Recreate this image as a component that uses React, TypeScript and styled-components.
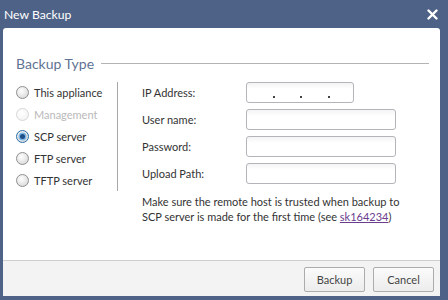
import React from "react";
import styled, { createGlobalStyle } from "styled-components";

const Global = createGlobalStyle`
  html, body { margin: 0; padding: 0; }
  body { width: 448px; height: 300px; overflow: hidden; font-family: Lato, "Open Sans", sans-serif; }
`;

const Window = styled.div`
  width: 448px;
  height: 300px;
  background: #4e6287;
  display: flex;
  flex-direction: column;
  box-sizing: border-box;
`;

const TitleBar = styled.div`
  height: 28px;
  display: flex;
  align-items: center;
  justify-content: space-between;
  padding: 1px 10px 0 4px;
  box-sizing: border-box;
  color: #ffffff;
  font-size: 12.2px;
`;

const Body = styled.div`
  flex: 1;
  margin: 0 8px 4px 3px;
  background: #ffffff;
  border-radius: 3px 3px 0 0;
  display: flex;
  flex-direction: column;
  overflow: hidden;
`;

const Content = styled.div`
  flex: 1;
  padding: 26px 11px 0 13px;
`;

const Legend = styled.div`
  display: flex;
  align-items: center;
  height: 18px;
  color: #5f7394;
  font-size: 14px;
`;

const LegendLine = styled.div`
  flex: 1;
  height: 1px;
  background: #b4b4b4;
  margin-left: 7px;
`;

const Columns = styled.div`
  display: flex;
  margin-top: 10px;
`;

const RadioList = styled.div`
  width: 101px;
  height: 109px;
  border-right: 1px solid #a8a8a8;
  display: flex;
  flex-direction: column;
`;

const RadioRow = styled.div<{ $disabled?: boolean }>`
  height: 23px;
  display: flex;
  align-items: center;
  font-size: 11px;
  color: ${(p) => (p.$disabled ? "#b9b9b9" : "#333333")};
  white-space: nowrap;
`;

const RadioCircle = styled.span<{ $checked?: boolean; $disabled?: boolean }>`
  width: 11px;
  height: 11px;
  border-radius: 50%;
  border: 1px solid ${(p) => (p.$checked ? "#2a6fa8" : p.$disabled ? "#d6d6d6" : "#8f8f8f")};
  background: ${(p) =>
    p.$disabled
      ? "radial-gradient(circle at 40% 35%, #ffffff, #f1f1f1)"
      : "radial-gradient(circle at 40% 35%, #ffffff 0%, #e4e4e4 60%, #cfcfcf 100%)"};
  margin-right: 5px;
  display: flex;
  align-items: center;
  justify-content: center;
  flex-shrink: 0;
  &::after {
    content: "";
    display: ${(p) => (p.$checked ? "block" : "none")};
    width: 5px;
    height: 5px;
    border-radius: 50%;
    background: #1d4f86;
    box-shadow: 0 0 0 1.5px #7fb6e4;
  }
`;

const RightCol = styled.div`
  flex: 1;
  padding-left: 24px;
`;

const FormGrid = styled.div`
  display: grid;
  grid-template-columns: 104px auto;
  row-gap: 6px;
  align-items: center;
`;

const Label = styled.div`
  font-size: 11px;
  color: #333333;
`;

const Field = styled.div<{ $w: number }>`
  width: ${(p) => p.$w}px;
  height: 21px;
  box-sizing: border-box;
  border: 1px solid #b3b5bb;
  border-radius: 3px;
  background: linear-gradient(#f4f4f4, #ffffff 6px);
  position: relative;
`;

const IpDot = styled.span`
  position: absolute;
  top: 13px;
  width: 1.5px;
  height: 1.5px;
  background: #444;
`;

const Note = styled.div`
  margin-top: 10px;
  font-size: 11px;
  line-height: 15px;
  color: #333333;
  width: 268px;
`;

const Link = styled.a`
  color: #6a3d8e;
  text-decoration: underline;
`;

const Footer = styled.div`
  height: 36px;
  box-sizing: border-box;
  border-top: 1px solid #cfcfcf;
  background: #f3f3f3;
  display: flex;
  justify-content: flex-end;
  align-items: center;
  gap: 8px;
  padding: 2px 6px 0 0;
`;

const Button = styled.button`
  width: 61px;
  height: 25px;
  box-sizing: border-box;
  border: 1px solid #acacac;
  border-radius: 2px;
  background: linear-gradient(#fbfbfb, #ececec);
  color: #444444;
  font-family: inherit;
  font-size: 11px;
  padding: 0;
`;

const Close = () => (
  <svg width="11" height="11" viewBox="0 0 11 11">
    <path d="M1.5 1.5 L9.5 9.5 M9.5 1.5 L1.5 9.5" stroke="#fff" strokeWidth="2.4" strokeLinecap="round" />
  </svg>
);

const radios = [
  { label: "This appliance" },
  { label: "Management", disabled: true },
  { label: "SCP server", checked: true },
  { label: "FTP server" },
  { label: "TFTP server" },
];

export default function App() {
  return (
    <>
      <Global />
      <Window>
        <TitleBar>
          <span>New Backup</span>
          <Close />
        </TitleBar>
        <Body>
          <Content>
            <Legend>
              <span>Backup Type</span>
              <LegendLine />
            </Legend>
            <Columns>
              <RadioList>
                {radios.map((r) => (
                  <RadioRow key={r.label} $disabled={r.disabled}>
                    <RadioCircle $checked={r.checked} $disabled={r.disabled} />
                    {r.label}
                  </RadioRow>
                ))}
              </RadioList>
              <RightCol>
                <FormGrid>
                  <Label>IP Address:</Label>
                  <Field $w={108}>
                    <IpDot style={{ left: 26 }} />
                    <IpDot style={{ left: 53 }} />
                    <IpDot style={{ left: 81 }} />
                  </Field>
                  <Label>User name:</Label>
                  <Field $w={150} />
                  <Label>Password:</Label>
                  <Field $w={150} />
                  <Label>Upload Path:</Label>
                  <Field $w={150} />
                </FormGrid>
                <Note>
                  Make sure the remote host is trusted when backup to SCP server is made for the first time (see{" "}
                  <Link href="#">sk164234</Link>)
                </Note>
              </RightCol>
            </Columns>
          </Content>
          <Footer>
            <Button>Backup</Button>
            <Button>Cancel</Button>
          </Footer>
        </Body>
      </Window>
    </>
  );
}
